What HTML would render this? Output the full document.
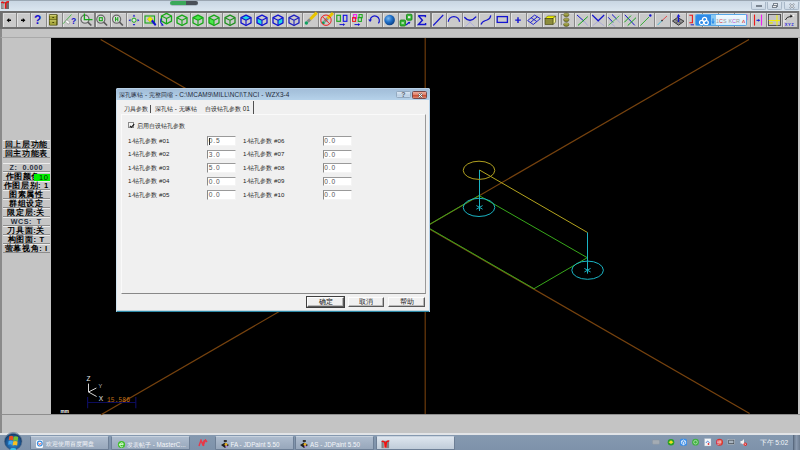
<!DOCTYPE html>
<html><head><meta charset="utf-8">
<style>
*{margin:0;padding:0;box-sizing:border-box}
html,body{width:800px;height:450px;overflow:hidden;background:#c4c4c4;font-family:"Liberation Sans",sans-serif}
.a{position:absolute}
#title{position:absolute;left:0;top:0;width:800px;height:11px;background:linear-gradient(#c9d6e3,#dbe6f0);border-top:1px solid #9ba6b2}
#tbar{position:absolute;left:0;top:11px;width:798.5px;height:17.5px;background:#6f6f6f}
.tb{position:absolute;top:1.5px;height:14.5px;background:#cacaca;border-left:1px solid #e2e2e2;border-top:1px solid #dadada;box-shadow:-0.6px 0 0 #8e8e8e, 0.6px 0 0 #8e8e8e;overflow:hidden}
#strip{position:absolute;left:0;top:28.5px;width:800px;height:9.5px;background:#c4c4c4;border-bottom:1.5px solid #a9a9a9;border-left:2px solid #8a8a8a}
#lpanel{position:absolute;left:0;top:38px;width:51px;height:377px;background:#c4c4c4;border-left:2px solid #8a8a8a;border-bottom:1px solid #8a8a8a}
#canvas{position:absolute;left:51px;top:38.3px;width:747px;height:376px;background:#000;overflow:hidden}
#bstrip{position:absolute;left:0;top:414px;width:800px;height:19px;background:#c4c4c4;border-left:2px solid #8a8a8a;border-top:1px solid #8e8e8e}
#tbar2{position:absolute;left:0;top:433px;width:800px;height:2px;background:#e2e4e7}
#task{position:absolute;left:0;top:435px;width:800px;height:15px;background:linear-gradient(#8599b0,#7e92aa)}
.wb{position:absolute;top:1.5px;width:15px;height:8.5px;border:0.6px solid #a9b8c8;border-top:none;border-radius:0 0 2px 2px;background:linear-gradient(#dce6f0,#cdd9e6)}
.tk{position:absolute;top:435.5px;height:14.5px;background:linear-gradient(#aebcce,#97a7bb);border:0.6px solid #6d7f96;border-top-color:#c8d2de;border-radius:1.5px}
.act{background:linear-gradient(#dde5ee,#c0ccd9)}
.tkt{position:absolute;top:3.2px;font:6.3px/9px "Liberation Sans",sans-serif;color:#f4f6fa;white-space:nowrap}
.lb{position:absolute;left:2.5px;width:47.5px;height:9px;background:#c6c6c6;border-top:1px solid #ececec;border-bottom:1px solid #8c8c8c;font:bold 7.6px/8px "Liberation Sans",sans-serif;color:#000;text-align:center;letter-spacing:0.6px;white-space:nowrap}
.lz{color:#283040;font-size:7.2px;letter-spacing:0.5px}
.grn{position:absolute;left:31.5px;top:1px;width:15.5px;height:7px;background:#00f000;color:#101810;font-size:7.5px;line-height:7px;text-align:right;padding-right:1px;font-weight:normal}
#dlg{position:absolute;left:116px;top:88px;width:313.5px;height:223.5px;background:#f0f0f0;border-radius:2.5px 2.5px 0 0;box-shadow:inset 0.7px 0 0 #c4def0,inset -1px 0 0 #b4d0e8,inset 0 -1.2px 0 #2c88a6}
#dtitle{position:absolute;left:0;top:0;width:100%;height:12.3px;border-radius:2.5px 2.5px 0 0;background:linear-gradient(#a2bcd8,#a8c4de 40%,#b6d2ea);box-shadow:inset 0 1px 0 #b8d0e6}
.dtt{position:absolute;left:2.7px;top:3.2px;letter-spacing:0.08px;font:6.45px/8px "Liberation Sans",sans-serif;color:#1e2a3a;white-space:nowrap}
.lbl{position:absolute;font:6.1px/10px "Liberation Sans",sans-serif;color:#1a1a1a;white-space:nowrap}
.inp{position:absolute;width:29px;height:9.5px;background:#fff;border-top:1.5px solid #9a9a9a;border-left:1px solid #8a8a8a;border-right:1px solid #f4f4f4;border-bottom:1px solid #f4f4f4;font:6.6px/8.5px "Liberation Sans",sans-serif;color:#555;padding-left:0.8px;letter-spacing:0.9px}
.tabt{position:absolute;font:6.3px/10px "Liberation Sans",sans-serif;color:#1a1a1a;white-space:nowrap}
.btn{position:absolute;top:297.2px;height:10px;background:#f0f0f0;border-top:1px solid #fcfcfc;border-left:1px solid #fcfcfc;border-right:1px solid #5a5a5a;border-bottom:1px solid #5a5a5a;box-shadow:inset -0.8px -0.8px 0 #a8a8a8;font:6.5px/8px "Liberation Sans",sans-serif;color:#101010;text-align:center}
</style></head><body>
<div id="title"></div>
<div class="a" style="left:170px;top:1.2px;width:28px;height:3.8px;border-radius:2px;background:linear-gradient(90deg,#3aa85a 0,#3aa85a 57%,#4a5058 57%);box-shadow:0 0.5px 0.5px #8a9aa8"></div>
<svg class="a" style="left:0;top:0" width="12" height="11" viewBox="0 0 12 11"><rect x="1.2" y="1.8" width="7.8" height="7.2" fill="#6c6c6c"/><rect x="1.5" y="2.5" width="1.6" height="6" fill="#9a9a9a"/><rect x="3.4" y="3.4" width="1.8" height="5.4" fill="#c8c8c8"/><path d="M1.2,2.8 Q2.6,1.6 3.8,3.2" fill="none" stroke="#f01010" stroke-width="1.4"/><path d="M5.6,8.6 V3.6 Q6.6,1.4 9,1.9" fill="none" stroke="#f01010" stroke-width="1.5"/></svg>
<div class="wb" style="left:750.5px"><div class="a" style="left:4.5px;top:3.4px;width:6px;height:1.8px;background:#f4f4f4;border:0.5px solid #7a8490"></div></div>
<div class="wb" style="left:767px"><div class="a" style="left:5px;top:1.5px;width:5px;height:3.5px;border:0.8px solid #7a8490;background:#eee"></div><div class="a" style="left:4px;top:3px;width:5px;height:3.5px;border:0.8px solid #7a8490;background:#eee"></div></div>
<div class="wb" style="left:783.5px"><svg class="a" style="left:4.5px;top:1.3px" width="6" height="6"><path d="M0.8,0.8 L5.2,5.2 M5.2,0.8 L0.8,5.2" stroke="#7a8490" stroke-width="1.6"/><path d="M0.8,0.8 L5.2,5.2 M5.2,0.8 L0.8,5.2" stroke="#f4f4f4" stroke-width="0.7"/></svg></div>
<div id="tbar">
<div class="tb" style="left:2.5px;width:13.0px"></div>
<div class="tb" style="left:16.7px;width:13.1px"></div>
<div class="tb" style="left:31.0px;width:14.5px"></div>
<div class="tb" style="left:46.7px;width:15.1px"></div>
<div class="tb" style="left:63.0px;width:15.0px"></div>
<div class="tb" style="left:79.2px;width:15.1px"></div>
<div class="tb" style="left:95.5px;width:14.3px"></div>
<div class="tb" style="left:111.0px;width:14.8px"></div>
<div class="tb" style="left:127.0px;width:14.8px"></div>
<div class="tb" style="left:143.0px;width:14.8px"></div>
<div class="tb" style="left:159.0px;width:14.8px"></div>
<div class="tb" style="left:175.0px;width:14.8px"></div>
<div class="tb" style="left:191.0px;width:14.8px"></div>
<div class="tb" style="left:207.0px;width:14.8px"></div>
<div class="tb" style="left:223.0px;width:14.8px"></div>
<div class="tb" style="left:239.0px;width:14.8px"></div>
<div class="tb" style="left:255.0px;width:14.8px"></div>
<div class="tb" style="left:271.0px;width:14.8px"></div>
<div class="tb" style="left:287.0px;width:14.8px"></div>
<div class="tb" style="left:303.0px;width:14.8px"></div>
<div class="tb" style="left:319.0px;width:14.8px"></div>
<div class="tb" style="left:335.0px;width:14.8px"></div>
<div class="tb" style="left:351.0px;width:14.8px"></div>
<div class="tb" style="left:367.0px;width:14.8px"></div>
<div class="tb" style="left:383.0px;width:14.8px"></div>
<div class="tb" style="left:399.0px;width:15.3px"></div>
<div class="tb" style="left:415.5px;width:14.8px"></div>
<div class="tb" style="left:431.5px;width:14.3px"></div>
<div class="tb" style="left:447.0px;width:14.8px"></div>
<div class="tb" style="left:463.0px;width:14.8px"></div>
<div class="tb" style="left:479.0px;width:14.8px"></div>
<div class="tb" style="left:495.0px;width:14.8px"></div>
<div class="tb" style="left:511.0px;width:14.8px"></div>
<div class="tb" style="left:527.0px;width:14.8px"></div>
<div class="tb" style="left:543.0px;width:14.8px"></div>
<div class="tb" style="left:559.0px;width:14.8px"></div>
<div class="tb" style="left:575.0px;width:14.8px"></div>
<div class="tb" style="left:591.0px;width:14.8px"></div>
<div class="tb" style="left:607.0px;width:14.8px"></div>
<div class="tb" style="left:623.0px;width:14.8px"></div>
<div class="tb" style="left:639.0px;width:14.8px"></div>
<div class="tb" style="left:655.0px;width:14.8px"></div>
<div class="tb" style="left:671.0px;width:15.2px"></div>
<div class="tb" style="left:687.4px;width:14.8px"></div>
<div class="tb" style="left:703.4px;width:14.6px"></div>
<div class="tb" style="left:719.2px;width:14.6px"></div>
<div class="tb" style="left:735.0px;width:14.6px"></div>
<div class="tb" style="left:750.8px;width:15.0px"></div>
<div class="tb" style="left:767.0px;width:15.0px"></div>
<div class="tb" style="left:783.2px;width:13.6px"></div>
</div>
<svg class="a" style="left:0;top:0" width="800" height="30" viewBox="0 0 800 30"><path d="M6.6,20.2 L9.2,17.9 V19.4 H11 V21 H9.2 V22.5Z" fill="#000"/><path d="M25.4,20.2 L22.8,17.9 V19.4 H21 V21 H22.8 V22.5Z" fill="#000"/><text x="37.7" y="24.4" font-family="Liberation Sans" font-weight="bold" font-size="12" fill="#1414d0" text-anchor="middle">?</text><rect x="49" y="14.3" width="8.6" height="11.2" rx="1" fill="#4a4a08"/><rect x="49.7" y="15" width="6.6" height="4.5" fill="#a8a840"/><rect x="49.7" y="20.3" width="6.6" height="4.5" fill="#a8a840"/><rect x="49.7" y="15" width="6.6" height="1" fill="#d0d070"/><rect x="49.7" y="20.3" width="6.6" height="1" fill="#d0d070"/><rect x="52.3" y="17" width="1.8" height="0.9" fill="#3a3a00"/><rect x="52.3" y="22.1" width="1.8" height="0.9" fill="#3a3a00"/><line x1="63" y1="23.8" x2="71.5" y2="14.5" stroke="#30b030" stroke-width="0.8"/><ellipse cx="67.6" cy="22" rx="2.4" ry="1.5" transform="rotate(40 67.6 22)" fill="#f8f8f8" stroke="#8a8a8a" stroke-width="0.6"/><text x="73.6" y="23.6" font-family="Liberation Sans" font-weight="bold" font-size="8.5" fill="#1414d0" text-anchor="middle">?</text><circle cx="85" cy="19.2" r="3.9" fill="#d4d4d4" stroke="#6a6a6a" stroke-width="1.5"/><circle cx="85" cy="19.2" r="3.1" fill="none" stroke="#eeeeee" stroke-width="0.5"/><line x1="87.9" y1="22.099999999999998" x2="91.3" y2="25.5" stroke="#5a5a5a" stroke-width="1.6"/><path d="M84.4,13.6 V19.6 H92.5" fill="none" stroke="#18a818" stroke-width="1.3"/><circle cx="100.8" cy="19.2" r="3.9" fill="#d4d4d4" stroke="#6a6a6a" stroke-width="1.5"/><circle cx="100.8" cy="19.2" r="3.1" fill="none" stroke="#eeeeee" stroke-width="0.5"/><line x1="103.7" y1="22.099999999999998" x2="107.1" y2="25.5" stroke="#5a5a5a" stroke-width="1.6"/><rect x="99.3" y="17.7" width="3" height="3" fill="none" stroke="#18a818" stroke-width="1.1"/><circle cx="116.6" cy="19.2" r="3.9" fill="#d4d4d4" stroke="#6a6a6a" stroke-width="1.5"/><circle cx="116.6" cy="19.2" r="3.1" fill="none" stroke="#eeeeee" stroke-width="0.5"/><line x1="119.5" y1="22.099999999999998" x2="122.89999999999999" y2="25.5" stroke="#5a5a5a" stroke-width="1.6"/><path d="M115.5,17 V21.4 M117.8,17 V21.4 M115.5,19.2 H117.8" stroke="#18a818" stroke-width="1"/><circle cx="134" cy="20.2" r="2.1" fill="#e4e4e4" stroke="#18a818" stroke-width="1"/><path d="M134,14.6 l-1.3,1.9 h2.6z M134,25.8 l-1.3,-1.9 h2.6z M128.6,20.2 l1.9,-1.3 v2.6z M139.4,20.2 l-1.9,-1.3 v2.6z" fill="#1414d0"/><rect x="145" y="16" width="9.5" height="7" fill="none" stroke="#18a818" stroke-width="1.1"/><path d="M147.3,19.2 L150,16.5 L152.8,19.3 L150.1,22Z" fill="#f0f000" stroke="#a0a000" stroke-width="0.4"/><path d="M151,21.2 L152.8,19.6 L156.4,24.6 L155,26Z" fill="#1414d0"/><polygon points="166.5,13.4 171.5,16.0 171.5,21.2 166.5,23.8 161.5,21.2 161.5,16.0" fill="none" stroke="#18a818" stroke-width="1.3" stroke-linejoin="round"/><path d="M166.5,18.6 L161.5,16.0 M166.5,18.6 L171.5,16.0 M166.5,18.6 L166.5,23.8" stroke="#18a818" stroke-width="1.1"/><path d="M161.2,18.5 Q159.6,22.5 162.5,24.8" fill="none" stroke="#1414d0" stroke-width="1.1"/><path d="M163.8,25.6 l-2.6,0.2 l1.2,-2.3z" fill="#1414d0"/><polygon points="182.0,15.1 187.0,17.7 187.0,22.9 182.0,25.5 177.0,22.9 177.0,17.7" fill="none" stroke="#18a818" stroke-width="1.3" stroke-linejoin="round"/><path d="M182,20.3 L177,17.7 M182,20.3 L187,17.7 M182,20.3 L182,25.5" stroke="#18a818" stroke-width="1.1"/><polygon points="198.0,15.1 203.0,17.7 198.0,20.3 193.0,17.7" fill="#48e848"/><polygon points="198.0,15.1 203.0,17.7 203.0,22.9 198.0,25.5 193.0,22.9 193.0,17.7" fill="none" stroke="#18a818" stroke-width="1.3" stroke-linejoin="round"/><path d="M198,20.3 L193,17.7 M198,20.3 L203,17.7 M198,20.3 L198,25.5" stroke="#18a818" stroke-width="1.1"/><polygon points="209.0,17.7 214.0,20.3 214.0,25.5 209.0,22.9" fill="#48e848"/><polygon points="214.0,15.1 219.0,17.7 219.0,22.9 214.0,25.5 209.0,22.9 209.0,17.7" fill="none" stroke="#18a818" stroke-width="1.3" stroke-linejoin="round"/><path d="M214,20.3 L209,17.7 M214,20.3 L219,17.7 M214,20.3 L214,25.5" stroke="#18a818" stroke-width="1.1"/><polygon points="230.0,15.1 235.0,17.7 235.0,22.9 230.0,25.5 225.0,22.9 225.0,17.7" fill="none" stroke="#209020" stroke-width="1.3" stroke-linejoin="round"/><path d="M230,20.3 L225,17.7 M230,20.3 L235,17.7 M230,20.3 L230,25.5" stroke="#209020" stroke-width="1.1"/><polygon points="246.0,15.1 251.0,17.7 246.0,20.3 241.0,17.7" fill="#20d8e0"/><polygon points="246.0,15.1 251.0,17.7 251.0,22.9 246.0,25.5 241.0,22.9 241.0,17.7" fill="none" stroke="#1414d0" stroke-width="1.3" stroke-linejoin="round"/><path d="M246,20.3 L241,17.7 M246,20.3 L251,17.7 M246,20.3 L246,25.5" stroke="#1414d0" stroke-width="1.1"/><polygon points="257.0,17.7 262.0,20.3 262.0,25.5 257.0,22.9" fill="#20d8e0"/><polygon points="262.0,15.1 267.0,17.7 267.0,22.9 262.0,25.5 257.0,22.9 257.0,17.7" fill="none" stroke="#1414d0" stroke-width="1.3" stroke-linejoin="round"/><path d="M262,20.3 L257,17.7 M262,20.3 L267,17.7 M262,20.3 L262,25.5" stroke="#1414d0" stroke-width="1.1"/><polygon points="278.0,20.3 283.0,17.7 283.0,22.9 278.0,25.5" fill="#20d8e0"/><polygon points="278.0,15.1 283.0,17.7 283.0,22.9 278.0,25.5 273.0,22.9 273.0,17.7" fill="none" stroke="#1414d0" stroke-width="1.3" stroke-linejoin="round"/><path d="M278,20.3 L273,17.7 M278,20.3 L283,17.7 M278,20.3 L278,25.5" stroke="#1414d0" stroke-width="1.1"/><polygon points="294.0,15.1 299.0,17.7 299.0,22.9 294.0,25.5 289.0,22.9 289.0,17.7" fill="none" stroke="#2020c0" stroke-width="1.3" stroke-linejoin="round"/><path d="M294,20.3 L289,17.7 M294,20.3 L299,17.7 M294,20.3 L294,25.5" stroke="#2020c0" stroke-width="1.1"/><line x1="316.8" y1="12.6" x2="310.2" y2="19.2" stroke="#e8c400" stroke-width="3"/><line x1="310.2" y1="19.2" x2="307.6" y2="21.8" stroke="#8a8a8a" stroke-width="3"/><circle cx="306.4" cy="23" r="1.7" fill="#10a060"/><line x1="333" y1="13" x2="327.5" y2="18.5" stroke="#e8c400" stroke-width="3"/><line x1="327.5" y1="18.5" x2="324.5" y2="21.5" stroke="#8a8a8a" stroke-width="3"/><circle cx="323.3" cy="22.8" r="1.5" fill="#10a060"/><circle cx="326" cy="20.2" r="5.2" fill="none" stroke="#f02020" stroke-width="1"/><line x1="322.3" y1="16.5" x2="329.7" y2="23.9" stroke="#f02020" stroke-width="1"/><rect x="336.8" y="15.3" width="3.6" height="6" fill="none" stroke="#18a818" stroke-width="1.1"/><rect x="343.3" y="15.3" width="3.6" height="6" fill="none" stroke="#1010e8" stroke-width="1.1"/><path d="M339.5,24.6 H343" stroke="#1414d0" stroke-width="1"/><path d="M345.2,24.6 l-2.2,-1.4 v2.8z" fill="#1414d0"/><rect x="353.6" y="14.5" width="2.8" height="4" fill="none" stroke="#f020f0" stroke-width="1"/><rect x="352.6" y="17.6" width="3" height="3.8" fill="none" stroke="#f01818" stroke-width="1"/><rect x="359" y="14.6" width="3.2" height="3.2" fill="none" stroke="#18a818" stroke-width="1"/><rect x="358.2" y="17.4" width="3.2" height="4" fill="none" stroke="#18a818" stroke-width="1"/><path d="M354.5,24.6 H358" stroke="#1414d0" stroke-width="1"/><path d="M360.2,24.6 l-2.2,-1.4 v2.8z" fill="#1414d0"/><path d="M370.2,20 A4.6,4.6 0 1,1 378.4,23.4" fill="none" stroke="#1414d0" stroke-width="1.2"/><path d="M368.2,19.4 h3.8 l-1.9,2.6z" fill="#1414d0"/><defs><radialGradient id="sph" cx="0.38" cy="0.35" r="0.7"><stop offset="0" stop-color="#7ab8f0"/><stop offset="0.5" stop-color="#2070c8"/><stop offset="1" stop-color="#0a3c80"/></radialGradient></defs><circle cx="389.6" cy="20" r="5.3" fill="url(#sph)"/><rect x="406.5" y="14.2" width="5.5" height="6" rx="1" fill="#38b838" stroke="#108010" stroke-width="0.8"/><rect x="408" y="16.2" width="2.4" height="2" fill="#e8e8e8"/><rect x="400" y="20" width="5.5" height="6" rx="1" fill="#38b838" stroke="#108010" stroke-width="0.8"/><rect x="401.5" y="22" width="2.4" height="2" fill="#a8d8a8"/><path d="M406,25 L409,22.5" stroke="#1414d0" stroke-width="1.1"/><path d="M410.6,21.8 l-2.8,0.2 l1.4,2.2z" fill="#1414d0"/><path d="M418.2,15.8 H425.4 V17.2 M418.4,15.8 L422.4,20.2 L418.4,24.5 H425.6 V23" fill="none" stroke="#1414d0" stroke-width="1.4"/><line x1="433.2" y1="25.5" x2="443.2" y2="15" stroke="#1414d0" stroke-width="1.1"/><path d="M448.3,21.8 A5.6,5.2 0 0,1 459.5,21.8" fill="none" stroke="#1414d0" stroke-width="1.3"/><path d="M463.5,16 L474.5,26.5 M476.5,16 L465.5,26.5" stroke="#9090e8" stroke-width="0.5"/><path d="M464.3,17.3 Q470,23.5 476.2,16.6" fill="none" stroke="#1414d0" stroke-width="1.4"/><path d="M481,24.5 C482,21 484.5,21 487,20 C489.5,19 490.5,17.5 490.8,15.3" fill="none" stroke="#1414d0" stroke-width="1.2"/><rect x="497.2" y="16.6" width="10.2" height="5.8" fill="none" stroke="#1414d0" stroke-width="1.3"/><path d="M518,17.2 V23 M515.2,20.1 H520.8" stroke="#1414d0" stroke-width="1.4"/><path d="M527.6,20.6 L534.6,15.1 L540.3,18.6 L533.3,24.5Z M531.1,17.8 L536.8,21.5 M537.4,16.8 L530.4,22.5" fill="none" stroke="#1414d0" stroke-width="0.9" stroke-linejoin="round"/><polygon points="545,18.6 547.6,16 555.6,16 553,18.6" fill="#f4f400" stroke="#303000" stroke-width="0.5"/><polygon points="553,18.6 555.6,16 555.6,22 553,24.6" fill="#f4f490" stroke="#303000" stroke-width="0.5"/><rect x="545" y="18.6" width="8" height="6" fill="#8c8c3c" stroke="#303000" stroke-width="0.5"/><path d="M561.3,14.5 H563 M561.3,14.5 V25" stroke="#404040" stroke-width="0.5"/><ellipse cx="566.3" cy="14.8" rx="2.7" ry="1.9" fill="#8c8c30" stroke="#404010" stroke-width="0.5"/><ellipse cx="566.3" cy="19.8" rx="2.7" ry="1.9" fill="#8c8c30" stroke="#404010" stroke-width="0.5"/><ellipse cx="566.3" cy="24.6" rx="2.7" ry="1.9" fill="#8c8c30" stroke="#404010" stroke-width="0.5"/><path d="M564,14 H568.5 M564,19 H568.5 M564,23.8 H568.5" stroke="#d8d890" stroke-width="0.6"/><path d="M584,21.2 L587.8,25.6" stroke="#8888e0" stroke-width="0.6"/><line x1="577" y1="15" x2="584" y2="21.2" stroke="#1414d0" stroke-width="1"/><line x1="578" y1="25.4" x2="587.8" y2="16.6" stroke="#18a818" stroke-width="1"/><path d="M592.5,25.8 L598.2,21.3 L604.2,25.8" fill="none" stroke="#9090e0" stroke-width="0.5"/><path d="M592.2,15 L598.2,20.8 L604.2,15" fill="none" stroke="#1414d0" stroke-width="1.2"/><path d="M610.5,23 L615,26.5 M615.5,18 L620,22.8" stroke="#9090e0" stroke-width="0.5"/><line x1="612" y1="14.5" x2="616.6" y2="19" stroke="#1414d0" stroke-width="1"/><line x1="608.2" y1="17.3" x2="613" y2="22.4" stroke="#1414d0" stroke-width="1"/><line x1="608.5" y1="25.3" x2="619.3" y2="15.8" stroke="#38b838" stroke-width="0.8"/><line x1="624.8" y1="14.8" x2="634.8" y2="25.4" stroke="#1414d0" stroke-width="1"/><line x1="624.3" y1="22.3" x2="631" y2="15.6" stroke="#18a818" stroke-width="1"/><line x1="627.7" y1="25.6" x2="636" y2="17.7" stroke="#18a818" stroke-width="1"/><line x1="640.3" y1="25.6" x2="649" y2="17" stroke="#28a828" stroke-width="0.9"/><circle cx="650.3" cy="15.5" r="1.2" fill="#1414d0"/><line x1="667" y1="16" x2="662" y2="20.6" stroke="#e84040" stroke-width="0.9"/><line x1="662" y1="20.6" x2="657.6" y2="25" stroke="#30b8d8" stroke-width="0.9"/><circle cx="662" cy="20.6" r="0.8" fill="#202020"/><path d="M672.5,21 L677.5,17.4 L684,21.2 L678.6,25.2Z" fill="#909090" stroke="#303030" stroke-width="0.9" stroke-linejoin="round"/><path d="M675,19.3 L681.2,23.3 M680.8,19.3 L675.8,23.2" stroke="#404040" stroke-width="0.6"/><path d="M678.5,22 V16.5" stroke="#1414d0" stroke-width="1.3"/><path d="M678.5,14 l-1.8,2.8 h3.6z" fill="#1414d0"/><path d="M689.3,15.2 H692.4 V22.8 H689.3" fill="none" stroke="#f01818" stroke-width="1.1"/><path d="M690.6,24.8 H694" stroke="#1414d0" stroke-width="0.9"/><rect x="746" y="14.6" width="1.3" height="5.6" fill="#d020f0"/><rect x="746" y="22" width="1" height="1" fill="#1010d0"/><line x1="754.5" y1="14.6" x2="754.5" y2="25.6" stroke="#f01818" stroke-width="1.1"/><line x1="761.5" y1="14.6" x2="761.5" y2="25.6" stroke="#f020f0" stroke-width="1.1"/><path d="M756.5,20.3 H758.5" stroke="#1414d0" stroke-width="1.1"/><path d="M760.2,20.3 l-2,-1.4 v2.8z" fill="#1414d0"/><rect x="768.4" y="14.4" width="12" height="11" fill="#c4c4c4" stroke="#404040" stroke-width="0.9"/><path d="M768.8,20.6 H780 M777,15 V25.6" stroke="#f0f000" stroke-width="1"/><rect x="769.2" y="22.3" width="3.6" height="1.3" fill="#e8e800"/><path d="M785,20.5 Q786.5,16.5 791,16.3" fill="none" stroke="#202020" stroke-width="0.9"/><path d="M792.8,16.2 l-2.4,-1.6 v3.2z" fill="#202020"/><circle cx="785" cy="20.8" r="0.9" fill="#f8f8f8"/><circle cx="793.5" cy="15.6" r="0.9" fill="#f8f8f8"/><text x="789.6" y="26" font-family="Liberation Sans" font-weight="bold" font-size="4" fill="#2828e0" text-anchor="middle" letter-spacing="0.6">XYZ</text></svg>
<div class="a" style="left:694.5px;top:14.2px;width:52px;height:12.3px;border-radius:1.5px;background:linear-gradient(#f2f9fe,#d6ecfa);border:0.6px solid #58a8e8;overflow:hidden">
 <div class="a" style="left:0;top:0;width:15px;height:12px;background:#2f8be8"></div>
 <svg class="a" style="left:2px;top:1.2px" width="12" height="10" viewBox="0 0 12 10"><circle cx="6.6" cy="3.4" r="2.1" fill="none" stroke="#fff" stroke-width="1.2"/><circle cx="3.6" cy="6.4" r="2.1" fill="none" stroke="#fff" stroke-width="1.2"/><circle cx="8.2" cy="6.6" r="2.1" fill="none" stroke="#fff" stroke-width="1.2"/></svg>
 <div class="a" style="left:15px;top:0;width:5px;height:12px;background:#8ccaf2"></div>
 <svg class="a" style="left:15.5px;top:2.5px" width="4" height="7"><path d="M2,0.5 V4.5" stroke="#2f8be8" stroke-width="1.2"/><path d="M0.3,3.6 L2,6.2 L3.7,3.6Z" fill="#2f8be8"/></svg>
 <div class="a" style="left:20.5px;top:2.2px;font:5.4px/8px 'Liberation Sans';color:#9a9a9a;white-space:nowrap;letter-spacing:0.1px">1<span style="color:#d83030">C</span>S <span style="color:#9a9a9a">K</span><span style="color:#c050d0">C</span>R <span style="color:#e02020">ለ</span></div>
</div>
<div id="strip"></div>
<div id="lpanel"></div>
<div id="bstrip"></div>
<div id="tbar2"></div>
<div id="task"></div>
<div class="tk" style="left:29.5px;width:79.5px"><div class="a" style="left:5px;top:3.5px;width:7.5px;height:7.5px;border-radius:1.5px;background:#fafcff"><svg class="a" style="left:0;top:0" width="8" height="8"><circle cx="3.8" cy="3.6" r="2.4" fill="none" stroke="#3a90e0" stroke-width="1.2"/><path d="M2.6,3.2 L3.8,4.6 L5,3.2" stroke="#e03030" stroke-width="0.9" fill="none"/></svg></div><div class="tkt" style="left:15px;font-size:5.7px">欢迎使用百度网盘</div></div>
<div class="tk" style="left:111px;width:79px"><svg class="a" style="left:4.5px;top:3px" width="9" height="9"><circle cx="4.5" cy="4.5" r="3.6" fill="#3ec028"/><path d="M2.6,4.4 H6.4 M6.3,4.2 A1.9,1.9 0 1,0 5.9,6" fill="none" stroke="#f0fff0" stroke-width="0.9"/></svg><div class="tkt" style="left:15px">发表帖子 - MasterC...</div></div>
<svg class="a" style="left:198px;top:439px" width="10" height="8"><path d="M1,7 L3,1.2 L4.5,5 L6.5,1.2 L5.5,6.8 M5,7 L7.5,1 L9,3" fill="none" stroke="#e83848" stroke-width="1.4"/></svg>
<div class="tk" style="left:215px;width:79px"><svg class="a" style="left:3.5px;top:2.5px" width="10" height="10"><path d="M1,6 L5,3.5 L9,6 L5,9Z" fill="#202020"/><rect x="3.8" y="1" width="3" height="2" fill="#303030"/><circle cx="6" cy="5.5" r="1.4" fill="#e8b020"/><circle cx="6.3" cy="7.5" r="1" fill="#b080e0"/></svg><div class="tkt" style="left:14.5px">FA - JDPaint 5.50</div></div>
<div class="tk" style="left:294.5px;width:79.5px"><svg class="a" style="left:3.5px;top:2.5px" width="10" height="10"><path d="M1,6 L5,3.5 L9,6 L5,9Z" fill="#202020"/><rect x="3.8" y="1" width="3" height="2" fill="#303030"/><circle cx="6" cy="5.5" r="1.4" fill="#e8b020"/><circle cx="6.3" cy="7.5" r="1" fill="#b080e0"/></svg><div class="tkt" style="left:14.5px">AS - JDPaint 5.50</div></div>
<div class="tk act" style="left:375.5px;width:79.5px"><svg class="a" style="left:4.3px;top:3.3px" width="9" height="9"><rect x="0.5" y="0.8" width="7.6" height="7.4" fill="#808080"/><rect x="2.8" y="2.4" width="2.5" height="5.5" fill="#e0e0e0"/><path d="M0.8,1.8 Q2.3,0.5 3.8,2.6 L4.2,7.8 M4.8,7.8 L5.3,2.3 Q6.3,0.4 8.3,1.1" fill="none" stroke="#f01010" stroke-width="1.5"/></svg></div>
<svg class="a" style="left:0;top:430px" width="800" height="20" viewBox="0 430 800 20">
<defs><radialGradient id="orb" cx="0.5" cy="0.62" r="0.6"><stop offset="0" stop-color="#3a90d0"/><stop offset="0.6" stop-color="#1c5c9c"/><stop offset="0.85" stop-color="#163e6c"/><stop offset="1" stop-color="#8aa4bc"/></radialGradient></defs>
<circle cx="13.2" cy="441.2" r="8.8" fill="url(#orb)" stroke="#5c7088" stroke-width="0.6"/>
<ellipse cx="13.2" cy="449.2" rx="3" ry="1.3" fill="#40e0ff" opacity="0.75"/>
<path d="M9.3,436.3 Q11.2,435.3 13.4,436.5 L12.9,440.4 Q10.9,439.3 8.8,440.3Z" fill="#e85020"/>
<path d="M13.7,436.8 Q15.6,435.8 18.2,436.9 L17.7,441 Q15.5,440 13.2,441Z" fill="#78c030"/>
<path d="M8.7,440.9 Q10.8,439.9 12.8,441 L12.3,444.9 Q10.3,443.8 8.2,444.8Z" fill="#40a8f0"/>
<path d="M13.1,441.4 Q15.2,440.4 17.6,441.5 L17.1,445.4 Q14.9,444.4 12.6,445.4Z" fill="#f8c020"/>
<rect x="652.5" y="440" width="7" height="4.2" rx="0.8" fill="#a4acb4" stroke="#8c949c" stroke-width="0.4"/>
<circle cx="671" cy="442.2" r="3.3" fill="#28a028"/><path d="M668.6,442.2 L671,440.3 L673.4,442.2 L671,444.1Z" fill="#f0e020"/>
<rect x="680" y="438.7" width="7" height="7" rx="1.5" fill="#3c8ee8"/><path d="M683.5,440 L685.6,441.2 V443.5 L683.5,444.7 L681.4,443.5 V441.2Z M683.5,442.3 V444.7 M681.4,441.2 L683.5,442.3 L685.6,441.2" fill="none" stroke="#fff" stroke-width="0.7"/>
<circle cx="695.5" cy="442.2" r="3.4" fill="#40b040"/><circle cx="695.5" cy="442.2" r="1.8" fill="none" stroke="#c8f0c8" stroke-width="0.7"/>
<rect x="704.5" y="438.5" width="6.5" height="7.5" fill="#f4f6f8" stroke="#a0b0c0" stroke-width="0.4"/><path d="M706,443 Q707.5,439.5 709.5,443" fill="none" stroke="#3070d0" stroke-width="0.8"/><circle cx="708.5" cy="444" r="0.9" fill="#e03030"/>
<circle cx="719.5" cy="442.2" r="3.5" fill="#d83030"/><text x="719.5" y="444" font-family="Liberation Sans" font-size="4.5" fill="#fff" text-anchor="middle">拼</text>
<rect x="728" y="439.5" width="6.5" height="5" fill="#404850" stroke="#d0d8e0" stroke-width="0.5"/><rect x="729" y="440.5" width="4.5" height="2.8" fill="#a8b4c0"/>
<path d="M740.5,441 H742 L744,439 V445.5 L742,443.5 H740.5Z" fill="#f0f0f0"/><circle cx="745.2" cy="444.3" r="1.7" fill="#e02020"/><path d="M744.4,443.5 L746,445.1 M746,443.5 L744.4,445.1" stroke="#fff" stroke-width="0.5"/>
</svg>
<div class="a" style="left:759.5px;top:437.5px;font:6.6px/9px 'Liberation Sans',sans-serif;color:#f4f6fa;white-space:nowrap">下午 5:02</div>
<div class="a" style="left:792.5px;top:435px;width:7.5px;height:15px;background:linear-gradient(90deg,#6c7c90,#8a9ab0 40%,#6c7c90);border-left:0.8px solid #5a6a80"></div>
<div id="canvas"></div>
<svg class="a" style="left:0;top:0" width="800" height="450" viewBox="0 0 800 450">
<g fill="none" stroke-width="1">
<line x1="425.2" y1="38" x2="425.2" y2="414" stroke="#6c3a0c" stroke-width="1.2"/>
<line x1="100.7" y1="39.5" x2="749.6" y2="413.5" stroke="#76420e" stroke-width="1.25"/>
<line x1="101" y1="414.7" x2="749" y2="39.5" stroke="#76420e" stroke-width="1.25"/>
<polyline points="426,226.5 479,195.5 587.3,257.7 534,288.7 426,226.5" stroke="#38a81a"/>
<polyline points="479.5,170 587.5,232.5" stroke="#b4a41e"/>
<line x1="479.5" y1="170" x2="479.5" y2="211" stroke="#1ab4c4"/>
<line x1="587.5" y1="232.5" x2="587.5" y2="273.4" stroke="#1ab4c4"/>
<ellipse cx="479" cy="170.3" rx="15.8" ry="9.1" stroke="#b0a020"/>
<ellipse cx="479" cy="207.4" rx="15.8" ry="9.1" stroke="#1ab4c4"/>
<ellipse cx="587.6" cy="270.2" rx="15.8" ry="9.1" stroke="#1ab4c4"/>
<path d="M476.4,205.6 L482.6,209.2 M482.6,205.6 L476.4,209.2 M479.5,204.2 V210.6" stroke="#1ab4c4"/>
<path d="M584.4,268.4 L590.6,272 M590.6,268.4 L584.4,272 M587.5,267 V273.4" stroke="#1ab4c4"/>
<path d="M88.5,383.6 V392 L96.4,388 M88.5,392 L96.6,396.5" stroke="#d8d8d8"/>
<path d="M87.6,397 V408.3 M135.8,397 V408.3 M87.6,402.5 H135.8" stroke="#0c0c5c" stroke-width="1.2"/>
</g>
<text x="86.5" y="381" font-family="Liberation Sans" font-size="6.5" fill="#e8e8e8">Z</text>
<text x="98.6" y="387.5" font-family="Liberation Sans" font-size="5.5" fill="#c8c8c8">Y</text>
<text x="98.8" y="401" font-family="Liberation Sans" font-size="6.5" fill="#e8e8e8">X</text>
<text x="107" y="401.8" font-family="Liberation Mono" font-size="6.3" fill="#c87418" letter-spacing="0.1" textLength="23" lengthAdjust="spacingAndGlyphs">15.586</text>
<text x="60.6" y="412.6" font-family="Liberation Sans" font-weight="bold" font-size="6" fill="#ffffff" textLength="8.4" lengthAdjust="spacingAndGlyphs">mm</text>
</svg>
<div class="lb" style="top:139.7px">回上层功能</div>
<div class="lb" style="top:148.8px">回主功能表</div>
<div class="lb lz" style="top:162.5px">Z:&nbsp; 0.000</div>
<div class="lb" style="top:171.5px"><span style="position:absolute;left:3px">作图颜色</span><span class="grn">10</span></div>
<div class="lb" style="top:180.5px">作图层别: 1</div>
<div class="lb" style="top:189.5px">图素属性</div>
<div class="lb" style="top:198.5px">群组设定</div>
<div class="lb" style="top:207.5px">限定层:关</div>
<div class="lb lz" style="top:216.5px">WCS:&nbsp; T</div>
<div class="lb" style="top:225.5px">刀具面:关</div>
<div class="lb" style="top:234.5px">构图面: T</div>
<div class="lb" style="top:243.5px">萤幕视角: I</div>
<div id="dlg">
 <div id="dtitle"><div class="dtt">深孔啄钻 - 完整回缩 - C:\MCAM9\MILL\NCI\T.NCI - WZX3-4</div>
 <div class="a" style="left:279.5px;top:2.7px;width:15px;height:7.8px;border-radius:1.5px;background:linear-gradient(#dbe7f3,#c4d6e8 50%,#b6cce2 51%,#c8daec);border:0.6px solid #94aac0"><div class="a" style="left:4.8px;top:-0.6px;font:bold 7px/8px 'Liberation Sans';color:#5c6670">?</div></div>
 <div class="a" style="left:296px;top:2.7px;width:15.2px;height:8px;border-radius:1.5px;background:linear-gradient(#eeaa98,#e0826c 45%,#c84a30 50%,#d46a50 80%,#e08a74);border:0.6px solid #7a4a4a"><svg class="a" style="left:5px;top:1.3px" width="5" height="5"><path d="M0.7,0.7 L4.3,4.3 M4.3,0.7 L0.7,4.3" stroke="#6a6a6a" stroke-width="1.8"/><path d="M0.7,0.7 L4.3,4.3 M4.3,0.7 L0.7,4.3" stroke="#f4f4f4" stroke-width="1"/></svg></div>
 </div>
 <div class="tabt" style="left:7.7px;top:16px">刀具参数</div>
 <div class="a" style="left:34px;top:17.3px;width:0.8px;height:7.4px;background:#505050"></div>
 <div class="tabt" style="left:39px;top:16px">深孔钻 - 无啄钻</div>
 <div class="tabt" style="left:89px;top:16px">自设钻孔参数 01</div>
 <div class="a" style="left:137.3px;top:12.5px;width:0.8px;height:13px;background:#505050"></div>
 <div class="a" style="left:5px;top:26px;width:304.5px;height:180px;border-top:1px solid #fafafa;border-left:1px solid #fafafa;border-bottom:1.2px solid #888;border-right:1.5px solid #9a9a9a"></div>
 <div class="a" style="left:12px;top:34.3px;width:5.5px;height:5.5px;border:0.6px solid #8c8c8c;background:#f4f4f4"><svg class="a" style="left:-0.5px;top:-0.5px" width="6" height="6"><path d="M0.9,2.8 L2.4,4.3 L5.2,1.2" fill="none" stroke="#101010" stroke-width="1.1"/></svg></div>
 <div class="tabt" style="left:21px;top:32.5px">启用自设钻孔参数</div>
</div>
<div class="lbl" style="left:128px;top:135.9px">1-钻孔参数 #01</div>
<div class="inp" style="left:207px;top:136.4px">0.5<div class="a" style="left:0.5px;top:0.5px;width:0.8px;height:7px;background:#303030"></div></div>
<div class="lbl" style="left:243px;top:135.9px">1-钻孔参数 #06</div>
<div class="inp" style="left:322.5px;top:136.4px">0.0</div>
<div class="lbl" style="left:128px;top:149.4px">1-钻孔参数 #02</div>
<div class="inp" style="left:207px;top:149.9px">3.0</div>
<div class="lbl" style="left:243px;top:149.4px">1-钻孔参数 #07</div>
<div class="inp" style="left:322.5px;top:149.9px">0.0</div>
<div class="lbl" style="left:128px;top:162.9px">1-钻孔参数 #03</div>
<div class="inp" style="left:207px;top:163.4px">5.0</div>
<div class="lbl" style="left:243px;top:162.9px">1-钻孔参数 #08</div>
<div class="inp" style="left:322.5px;top:163.4px">0.0</div>
<div class="lbl" style="left:128px;top:176.4px">1-钻孔参数 #04</div>
<div class="inp" style="left:207px;top:176.9px">0.0</div>
<div class="lbl" style="left:243px;top:176.4px">1-钻孔参数 #09</div>
<div class="inp" style="left:322.5px;top:176.9px">0.0</div>
<div class="lbl" style="left:128px;top:189.9px">1-钻孔参数 #05</div>
<div class="inp" style="left:207px;top:190.4px">0.0</div>
<div class="lbl" style="left:243px;top:189.9px">1-钻孔参数 #10</div>
<div class="inp" style="left:322.5px;top:190.4px">0.0</div>
<div class="btn" style="left:307.3px;width:37px;outline:0.7px solid #404040">确定</div>
<div class="btn" style="left:347.8px;width:36.6px">取消</div>
<div class="btn" style="left:388px;width:37.4px">帮助</div>
</body></html>
